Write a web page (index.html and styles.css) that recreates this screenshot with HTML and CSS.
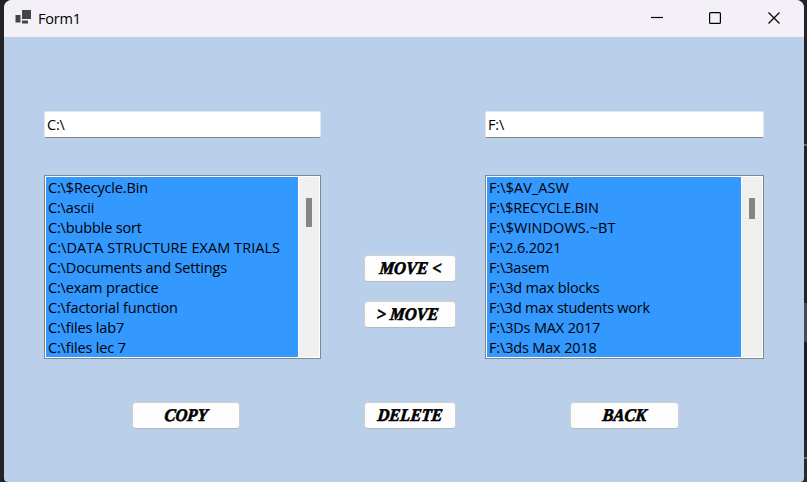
FILE: index.html
```
<!DOCTYPE html>
<html lang="en">
<head>
<meta charset="utf-8">
<title>Form1</title>
<link rel="stylesheet" href="styles.css">
</head>
<body>
<div class="desktop">
<main class="window">
  <header class="titlebar">
    <svg class="app-icon" width="17" height="16" viewBox="0 0 17 16"><path fill="#444" d="M7 1h9v9H7zM.5 6h5v7.500h-5zM7 11.500h6v3H7z"/></svg>
    <span class="title">Form1</span>
    <svg class="controls" width="130" height="14" viewBox="0 0 130 14" fill="none" stroke="#000" stroke-width="1.200"><path d="M0 6.500h12"/><rect x="58.600" y="1.600" width="10.800" height="10.800" rx="1"/><path d="M117.500 1.500l11 11m0-11l-11 11"/></svg>
  </header>
  <div class="client">
    <section class="column">
      <div class="field">C:\</div>
      <div class="listbox">
        <ul class="items">
          <li>C:\$Recycle.Bin</li>
          <li>C:\ascii</li>
          <li>C:\bubble sort</li>
          <li class="caps">C:\DATA STRUCTURE EXAM TRIALS</li>
          <li>C:\Documents and Settings</li>
          <li>C:\exam practice</li>
          <li>C:\factorial function</li>
          <li>C:\files lab7</li>
          <li>C:\files lec 7</li>
        </ul>
        <div class="scrollbar"><div class="thumb"></div></div>
      </div>
      <button class="btn copy"><span>COPY</span></button>
    </section>
    <section class="column actions">
      <button class="btn"><span>MOVE &lt;</span></button>
      <button class="btn second"><span>&gt; MOVE</span></button>
      <button class="btn delete"><span>DELETE</span></button>
    </section>
    <section class="column right">
      <div class="field">F:\</div>
      <div class="listbox">
        <ul class="items">
          <li class="caps">F:\$AV_ASW</li>
          <li>F:\$RECYCLE.BIN</li>
          <li class="caps">F:\$WINDOWS.~BT</li>
          <li>F:\2.6.2021</li>
          <li>F:\3asem</li>
          <li>F:\3d max blocks</li>
          <li class="tight">F:\3d max students work</li>
          <li>F:\3Ds MAX 2017</li>
          <li>F:\3ds Max 2018</li>
        </ul>
        <div class="scrollbar"><div class="thumb short"></div></div>
      </div>
      <button class="btn back"><span>BACK</span></button>
    </section>
  </div>
</main>
<div class="edge"></div>
</div>
</body>
</html>
```
FILE: styles.css
```
* { box-sizing: border-box; }
body { margin: 0; overflow: hidden; font-family: "Open Sans", "Noto Sans", sans-serif; color: #000; }
.desktop { display: flex; width: 807px; height: 482px; padding-left: 4px; background: #232326; }
.window { width: 800px; height: 482px; border-radius: 8px 8px 4px 4px; overflow: hidden; background: #bad0ea; }
.edge { width: 3px; background: linear-gradient(#232326 144px, #69696b 144px 146px, #232326 146px 303px, #494951 303px 342px, #17202b 342px 440px, #282a2d 440px 457px, #69696b 457px 459px, #282a2d 459px); }
.titlebar { display: flex; align-items: center; height: 37px; padding-left: 11px; background: #f3f0f7; }
.app-icon { margin-bottom: 3px; }
.title { margin-left: 6px; font-size: 14.500px; letter-spacing: -.2px; }
.controls { margin-left: auto; margin-right: 23px; margin-bottom: 1px; }
.client { display: grid; grid-template-columns: 277px 92px 279px; column-gap: 43px; height: 445px; padding: 74px 0 0 40px; }
.right { margin-left: -14px; width: 279px; }
.field { height: 27px; padding: 0 2px; background: #fff; border: 1px solid #e3e8ee; border-bottom-color: #858585; border-radius: 2px; font-size: 14.500px; line-height: 26px; letter-spacing: -.2px; }
.listbox { display: flex; height: 184px; margin-top: 37px; padding: 1px; border: 1px solid #828790; background: #fff; }
.items { flex: 1; margin: 0 1px 0 0; padding: 0 0 0 2px; overflow: hidden; list-style: none; background: #39f; font-size: 14.500px; line-height: 22px; letter-spacing: -.16px; white-space: nowrap; }
.items li { height: 20px; }
.items .caps { letter-spacing: .04px; }
.items .tight { letter-spacing: -.25px; }
.scrollbar { width: 20px; padding: 21px 0 0 7px; background: #f0f0f0; }
.thumb { width: 6px; height: 29px; background: #858585; }
.thumb.short { height: 21px; }
.btn { display: flex; align-items: center; justify-content: center; width: 92px; height: 27px; padding: 0 0 1px; border: 1px solid #d0d0d0; border-bottom-color: #b5b8bd; border-radius: 4px; background: #fdfdfd; color: #000; font: italic 900 16.500px "Liberation Serif", serif; -webkit-text-stroke: .6px #000; white-space: pre; }
.btn span { transform: translate(.5px, .5px) skewX(-6deg) scaleY(1.080); }
.copy { width: 108px; margin: 43px 0 0 88px; }
.back { width: 109px; margin: 43px 0 0 85px; }
.actions { padding-top: 144px; }
.second { margin-top: 19px; padding-right: 6px; }
.delete { margin-top: 74px; }
```
